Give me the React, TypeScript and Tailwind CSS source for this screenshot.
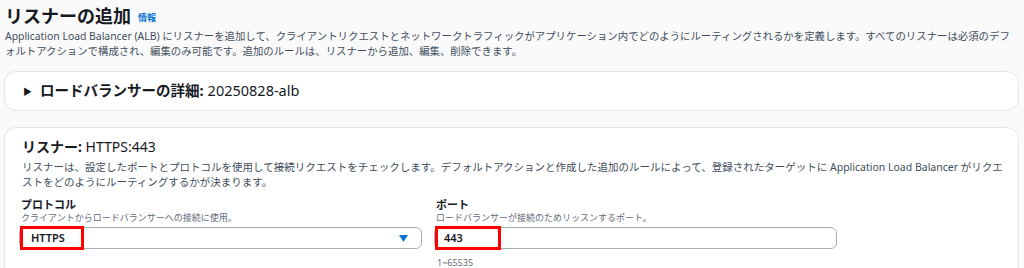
const font = { fontFamily: '"Noto Sans", "Noto Sans CJK JP", sans-serif' }

function Field({ label, sub, children, hint }: { label: string; sub: string; children: React.ReactNode; hint?: string }) {
  return (
    <div className="flex flex-col">
      <p className="m-0 text-[11px] leading-[14px] font-bold text-[#16191f] pl-[2px]">{label}</p>
      <p className="m-0 text-[9px] leading-[12px] text-[#5f6b7a] pl-[2px]">{sub}</p>
      <div className="mt-[3px]">{children}</div>
      {hint && <p className="m-0 mt-[8px] text-[9px] leading-[12px] text-[#5f6b7a] pl-[3px]">{hint}</p>}
    </div>
  )
}

function Marked({ width, children }: { width: number; children: React.ReactNode }) {
  // red annotation box drawn over the control
  return (
    <div className="relative">
      {children}
      <div className="absolute -top-[1px] left-[1px] h-[24px] border-[3px] border-[#ff0000]" style={{ width }} />
    </div>
  )
}

export default function App() {
  return (
    <div className="w-[1024px] h-[268px] overflow-hidden bg-[#fafafa] text-[#16191f]" style={font}>
      <div className="pl-[5px] pt-[4px]">
        <div className="flex items-center gap-[7px] h-[24px]">
          <h1 className="m-0 text-[18px] leading-[24px] font-bold">リスナーの追加</h1>
          <span className="text-[9px] font-bold text-[#0972d3] mt-[3px]">情報</span>
        </div>
        <p className="m-0 mt-[1px] text-[10.4px] leading-[15px] text-[#414d5c] whitespace-nowrap">
          Application Load Balancer (ALB) にリスナーを追加して、クライアントリクエストとネットワークトラフィックがアプリケーション内でどのようにルーティングされるかを定義します。すべてのリスナーは必須のデフ
          <br />
          ォルトアクションで構成され、編集のみ可能です。追加のルールは、リスナーから追加、編集、削除できます。
        </p>
      </div>

      <div className="ml-[4px] mr-[5px] mt-[12px] h-[40px] rounded-[12px] border border-[#e3e5e8] bg-white flex items-center pl-[18px] gap-[8px]">
        <span className="text-[9px] leading-none">▶</span>
        <span className="text-[14.5px] font-bold">ロードバランサーの詳細:</span>
        <span className="text-[14.5px] -ml-[4px]">20250828-alb</span>
      </div>

      <div className="ml-[4px] mr-[5px] mt-[16px] rounded-t-[12px] border border-[#e3e5e8] bg-white pl-[16px] pt-[9px] h-[200px]">
        <div className="text-[14px] leading-[20px] pl-[1px]">
          <span className="font-bold">リスナー:</span> HTTPS:443
        </div>
        <p className="m-0 mt-[3px] text-[10.5px] leading-[15px] text-[#414d5c] pl-[1px] whitespace-nowrap">
          リスナーは、設定したポートとプロトコルを使用して接続リクエストをチェックします。デフォルトアクションと作成した追加のルールによって、登録されたターゲットに Application Load Balancer がリクエ
          <br />
          ストをどのようにルーティングするかが決まります。
        </p>
        <div className="mt-[8px] grid grid-cols-[403px_403px] gap-x-[12px] -ml-[2px]">
          <Field label="プロトコル" sub="クライアントからロードバランサーへの接続に使用。">
            <Marked width={64}>
              <div className="h-[22px] rounded-[6px] border border-[#a8adb3] flex items-center justify-between pl-[11px] pr-[13px]">
                <span className="text-[11px] font-semibold">HTTPS</span>
                <svg width="9" height="7" viewBox="0 0 9 7"><path d="M0 0h9L4.5 7z" fill="#0972d3" /></svg>
              </div>
            </Marked>
          </Field>
          <Field label="ポート" sub="ロードバランサーが接続のためリッスンするポート。" hint="1~65535">
            <Marked width={66}>
              <div className="h-[22px] rounded-[6px] border border-[#a8adb3] flex items-center pl-[9px]">
                <span className="text-[11px] font-semibold">443</span>
              </div>
            </Marked>
          </Field>
        </div>
      </div>
    </div>
  )
}
